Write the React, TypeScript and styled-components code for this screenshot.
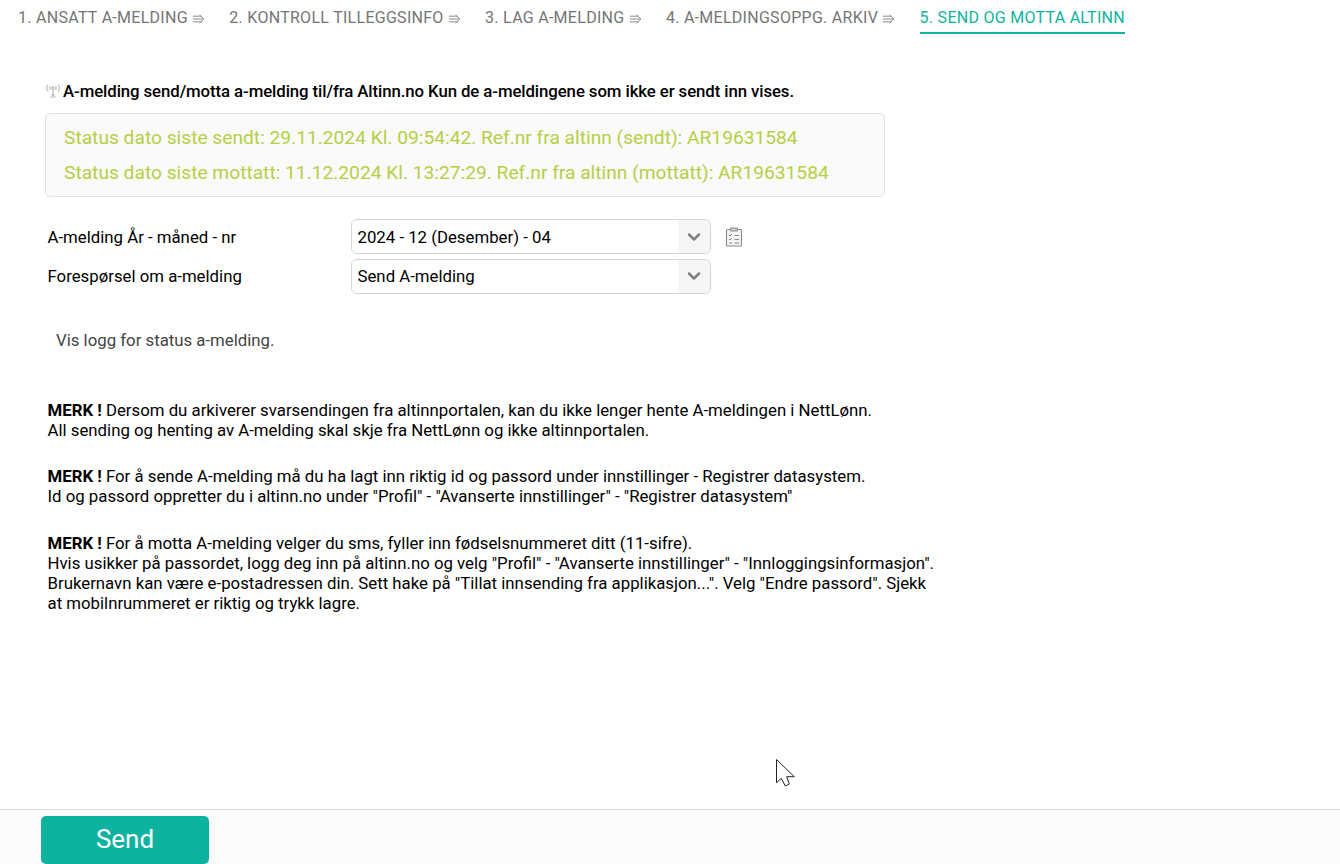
import React from 'react';
import styled, { createGlobalStyle } from 'styled-components';
import { ChevronDown } from 'lucide-react';

const GlobalStyle = createGlobalStyle`
  html, body {
    margin: 0;
    padding: 0;
    height: 100%;
    overflow: hidden;
    background: #fff;
  }
  body {
    font-family: Roboto, "Liberation Sans", sans-serif;
    font-size: 16.8px;
    color: #000;
  }
`;

const Page = styled.div`
  position: relative;
  width: 1340px;
  height: 864px;
  display: flex;
  flex-direction: column;
  overflow: hidden;
`;

const Tabs = styled.nav`
  display: flex;
  gap: 24px;
  height: 34px;
  padding-left: 18px;
`;

const Tab = styled.div<{ $active?: boolean }>`
  height: 34px;
  box-sizing: border-box;
  line-height: 36px;
  font-size: 16px;
  letter-spacing: 0.28px;
  white-space: nowrap;
  color: ${(p) => (p.$active ? '#0db39e' : '#757575')};
  border-bottom: 2px solid ${(p) => (p.$active ? '#0db39e' : 'transparent')};
`;

const TabArrow = styled.svg`
  width: 13.2px;
  height: 10px;
  vertical-align: -1px;
`;

const Content = styled.main`
  flex: 1;
  padding: 47px 0 0 45px;
  width: 900px;
`;

const Heading = styled.div`
  display: flex;
  align-items: center;
  gap: 2px;
  height: 20px;
  font-size: 16.8px;
  font-weight: 500;
  letter-spacing: -0.09px;
  white-space: nowrap;
`;

const StatusBox = styled.div`
  box-sizing: border-box;
  width: 840px;
  height: 84px;
  margin-top: 12px;
  padding: 6px 18px 0;
  background: #fafafa;
  border: 1px solid #e3e3e3;
  border-radius: 5px;
`;

const StatusLine = styled.div`
  height: 35px;
  line-height: 35px;
  font-size: 19.2px;
  color: #b5cf45;
  white-space: nowrap;
`;

const Form = styled.div`
  display: flex;
  flex-direction: column;
  gap: 4.6px;
  margin-top: 22px;
  padding-left: 2.5px;
`;

const FormRow = styled.div`
  display: flex;
  align-items: center;
  height: 35px;
`;

const FieldLabel = styled.label`
  width: 303.5px;
  white-space: nowrap;
`;

const Select = styled.div`
  box-sizing: border-box;
  width: 360px;
  height: 35px;
  display: flex;
  align-items: center;
  justify-content: space-between;
  border: 1px solid #d4d4d4;
  border-radius: 6px;
  overflow: hidden;
  padding-left: 5.5px;
`;

const SelectArrow = styled.span`
  width: 32px;
  height: 100%;
  display: flex;
  align-items: center;
  justify-content: center;
  background: #f6f6f6;
  color: #808080;
`;

const IconButton = styled.span`
  display: flex;
  margin-left: 14px;
`;

const LogLink = styled.div`
  margin: 36.4px 0 0 11px;
  height: 20px;
  line-height: 20px;
  color: #444;
`;

const Notes = styled.div`
  margin: 49.9px 0 0 2.5px;
  width: 900px;
`;

const Note = styled.p`
  margin: 0 0 26.5px;
  line-height: 20px;
  white-space: nowrap;
`;

const Footer = styled.footer`
  box-sizing: border-box;
  height: 55px;
  flex: none;
  padding: 6px 0 0 41px;
  background: #fbfbfb;
  border-top: 1px solid #d9d9d9;
`;

const SendButton = styled.button`
  width: 168px;
  height: 48px;
  padding: 0 0 2px;
  border: 0;
  border-radius: 5px;
  background: #0db39e;
  color: #fff;
  font-family: inherit;
  font-size: 26px;
`;

const Cursor = styled.svg`
  position: absolute;
  left: 775px;
  top: 759px;
`;

const ArrowGlyph = () => (
  <TabArrow viewBox="0 0 14 10" fill="none" stroke="currentColor" strokeWidth="0.9">
    <path d="M1 2h9M1 5h11M1 8h9M8 0.6L12.6 5 8 9.4" />
  </TabArrow>
);

const AntennaIcon = () => (
  <svg width="16" height="16" viewBox="0 0 16 16" fill="none" stroke="#999" strokeWidth="0.8">
    <circle cx="8" cy="5" r="1.2" />
    <path d="M8 6v7M5.5 14h5M6.5 12h3" />
    <path d="M5.5 3a3 3 0 0 0 0 4M10.5 3a3 3 0 0 1 0 4M3 1.5a5.5 5.5 0 0 0 0 7M13 1.5a5.5 5.5 0 0 1 0 7" />
  </svg>
);

const ChecklistIcon = () => (
  <svg width="18" height="20" viewBox="0 0 18 20" fill="#f4f4f4" stroke="#8a8a8a" strokeWidth="1.1">
    <rect x="1.5" y="2.5" width="15" height="16.5" rx="1" />
    <rect x="5.5" y="1" width="7" height="3" rx="0.8" fill="#ccc" />
    <path d="M4 8l1 1 2-2M9.5 8.5h4.5M4 12l1 1 2-2M9.5 12.5h4.5M4 16h3M9.5 16h4.5" fill="none" strokeWidth="1" />
  </svg>
);

const tabs = [
  '1. ANSATT A-MELDING',
  '2. KONTROLL TILLEGGSINFO',
  '3. LAG A-MELDING',
  '4. A-MELDINGSOPPG. ARKIV',
];

const App: React.FC = () => (
  <Page>
    <GlobalStyle />
    <Tabs>
      {tabs.map((t) => (
        <Tab key={t}>
          {t} <ArrowGlyph />
        </Tab>
      ))}
      <Tab $active>5. SEND OG MOTTA ALTINN</Tab>
    </Tabs>
    <Content>
      <Heading>
        <AntennaIcon />
        A-melding send/motta a-melding til/fra Altinn.no Kun de a-meldingene som ikke er sendt inn vises.
      </Heading>
      <StatusBox>
        <StatusLine>Status dato siste sendt: 29.11.2024 Kl. 09:54:42. Ref.nr fra altinn (sendt): AR19631584</StatusLine>
        <StatusLine>Status dato siste mottatt: 11.12.2024 Kl. 13:27:29. Ref.nr fra altinn (mottatt): AR19631584</StatusLine>
      </StatusBox>
      <Form>
        <FormRow>
          <FieldLabel>A-melding År - måned - nr</FieldLabel>
          <Select>
            2024 - 12 (Desember) - 04
            <SelectArrow><ChevronDown size={20} strokeWidth={3} /></SelectArrow>
          </Select>
          <IconButton><ChecklistIcon /></IconButton>
        </FormRow>
        <FormRow>
          <FieldLabel>Forespørsel om a-melding</FieldLabel>
          <Select>
            Send A-melding
            <SelectArrow><ChevronDown size={20} strokeWidth={3} /></SelectArrow>
          </Select>
        </FormRow>
      </Form>
      <LogLink>Vis logg for status a-melding.</LogLink>
      <Notes>
        <Note>
          <strong>MERK !</strong> Dersom du arkiverer svarsendingen fra altinnportalen, kan du ikke lenger hente A-meldingen i NettLønn.
          <br />
          All sending og henting av A-melding skal skje fra NettLønn og ikke altinnportalen.
        </Note>
        <Note>
          <strong>MERK !</strong> For å sende A-melding må du ha lagt inn riktig id og passord under innstillinger - Registrer datasystem.
          <br />
          Id og passord oppretter du i altinn.no under "Profil" - "Avanserte innstillinger" - "Registrer datasystem"
        </Note>
        <Note>
          <strong>MERK !</strong> For å motta A-melding velger du sms, fyller inn fødselsnummeret ditt (11-sifre).
          <br />
          Hvis usikker på passordet, logg deg inn på altinn.no og velg "Profil" - "Avanserte innstillinger" - "Innloggingsinformasjon".
          <br />
          Brukernavn kan være e-postadressen din. Sett hake på "Tillat innsending fra applikasjon...". Velg "Endre passord". Sjekk
          <br />
          at mobilnrummeret er riktig og trykk lagre.
        </Note>
      </Notes>
    </Content>
    <Footer>
      <SendButton>Send</SendButton>
    </Footer>
    <Cursor width="21" height="28" viewBox="0 0 21 28">
      <path d="M1.5 0.5V23.7L6.2 19.3 10.3 27 14.3 25 11.7 17.7H19.3Z" fill="#fff" stroke="#222" strokeWidth="1" />
    </Cursor>
  </Page>
);

export default App;
